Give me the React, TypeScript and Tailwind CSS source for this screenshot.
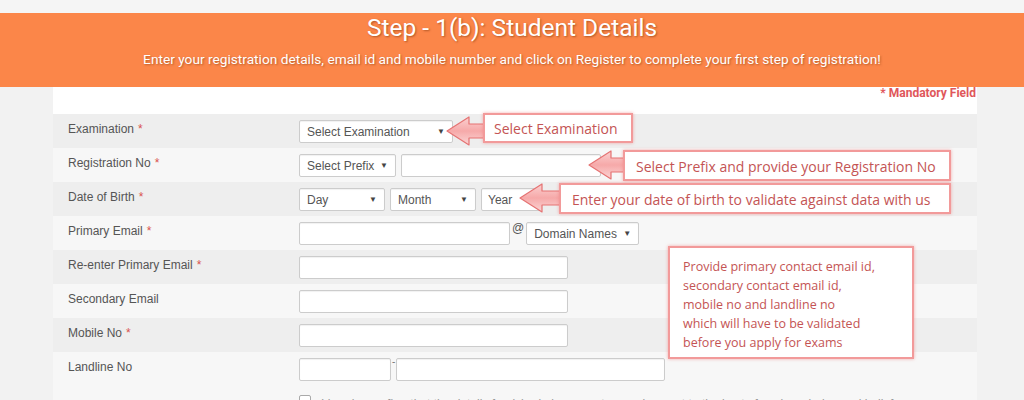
import React from "react"

const label = "text-[12px] text-[#555555]"
const inputCls = "h-[23px] border border-[#cccccc] bg-white rounded-[2px] shadow-[inset_0_1px_1px_rgba(0,0,0,0.06)]"

function Select({ text, w }: { text: string; w: string }) {
  return (
    <div className={`${inputCls} ${w} flex items-center justify-between px-[7px] text-[12px] text-[#555555]`}>
      <span>{text}</span>
      <span className="text-[8px] text-[#444]">▼</span>
    </div>
  )
}

function Row({ title, req, shade, children }: { title: string; req?: boolean; shade: boolean; children?: React.ReactNode }) {
  return (
    <div className={`flex h-[34px] ${shade ? "bg-[#eeeeee]" : "bg-[#f7f7f7]"}`}>
      <div className={`w-[246px] pl-[15px] pt-[6px] ${label}`}>
        {title}
        {req && <span className="text-[#d9534f] ml-[4px]">*</span>}
      </div>
      <div className="flex items-start pt-[6px] gap-[5px]">{children}</div>
    </div>
  )
}

function Arrow({ w = 40 }: { w?: number }) {
  return (
    <svg width={w} height="32" viewBox={`0 0 ${w} 32`}>
      <defs>
        <linearGradient id="ag" x1="0" y1="0" x2="0" y2="1">
          <stop offset="0" stopColor="#fbd0d0" />
          <stop offset="0.5" stopColor="#f6a9a9" />
          <stop offset="1" stopColor="#fbd6d6" />
        </linearGradient>
      </defs>
      <path
        d={`M1 16 L23 2 L23 9 L${w} 9 L${w} 23 L23 23 L23 30 Z`}
        fill="url(#ag)"
        stroke="#e57373"
        strokeWidth="1.2"
        strokeLinejoin="round"
      />
    </svg>
  )
}

function Callout({ children, cls }: { children: React.ReactNode; cls: string }) {
  return (
    <div
      className={`absolute bg-white border-2 border-[#f29a9a] shadow-[0_0_3px_rgba(240,120,120,0.6)] text-[#c45454] ${cls}`}
      style={{ fontFamily: '"Open Sans", "Noto Sans", sans-serif' }}
    >
      {children}
    </div>
  )
}

export default function App() {
  return (
    <div className="relative w-[1024px] h-[400px] overflow-hidden bg-[#f2f2f2]" style={{ fontFamily: '"Liberation Sans", Arial, sans-serif' }}>
      <div className="h-[13px] bg-[#f5f5f5]" />
      <div className="h-[74px] bg-[#fb8649] text-center text-white" style={{ fontFamily: "Roboto, sans-serif" }}>
        <div className="text-[24.5px] leading-[28px] pt-[1px] [text-shadow:1px_1px_2px_rgba(120,50,10,0.55)]">Step - 1(b): Student Details</div>
        <div className="text-[13.7px] leading-[16px] mt-[9px] [text-shadow:1px_1px_2px_rgba(120,50,10,0.5)]">
          Enter your registration details, email id and mobile number and click on Register to complete your first step of registration!
        </div>
      </div>
      <div className="ml-[53px] mr-[47px] bg-white">
        <div className="h-[27px] flex justify-end pr-[1px]">
          <span className="text-[12px] leading-[12px] font-bold text-[#e0575b]" style={{ fontFamily: "Roboto, sans-serif" }}>* Mandatory Field</span>
        </div>
        <Row title="Examination" req shade>
          <Select text="Select Examination" w="w-[154px]" />
        </Row>
        <Row title="Registration No" req shade={false}>
          <Select text="Select Prefix" w="w-[97px]" />
          <div className={`${inputCls} w-[200px]`} />
        </Row>
        <Row title="Date of Birth" req shade>
          <Select text="Day" w="w-[86px]" />
          <Select text="Month" w="w-[86px]" />
          <div className={`${inputCls} w-[60px] px-[6px] text-[12px] text-[#555] flex items-center`}>Year</div>
        </Row>
        <Row title="Primary Email" req shade={false}>
          <div className={`${inputCls} w-[211px]`} />
          <span className="text-[12px] text-[#555] -mt-[3px] -mx-[3px]">@</span>
          <Select text="Domain Names" w="w-[113px]" />
        </Row>
        <Row title="Re-enter Primary Email" req shade>
          <div className={`${inputCls} w-[269px]`} />
        </Row>
        <Row title="Secondary Email" shade={false}>
          <div className={`${inputCls} w-[269px]`} />
        </Row>
        <Row title="Mobile No" req shade>
          <div className={`${inputCls} w-[269px]`} />
        </Row>
        <Row title="Landline No" shade={false}>
          <div className={`${inputCls} w-[92px]`} />
          <span className="text-[10px] text-[#777] -mx-[4px] -mt-[4px]">-</span>
          <div className={`${inputCls} w-[269px]`} />
        </Row>
        <div className="h-[40px] bg-[#f7f7f7] flex items-start pl-[246px] pt-[9px] gap-[10px]">
          <div className="w-[12px] h-[12px] border border-[#aaa] rounded-[2px] bg-white" />
          <span className="text-[12px] leading-[14px] text-[#999] mt-[2px]">I hereby confirm that the details furnished above are true and correct to the best of my knowledge and belief.</span>
        </div>
      </div>

      <div className="absolute left-[446px] top-[115px]"><Arrow w={40} /></div>
      <Callout cls="left-[483px] top-[113px] w-[150px] h-[30px] pl-[9px] pt-[3px] text-[14px]">Select Examination</Callout>

      <div className="absolute left-[588px] top-[149px]"><Arrow w={38} /></div>
      <Callout cls="left-[623px] top-[150px] w-[328px] h-[31px] pl-[11px] pt-[4px] text-[14px]">Select Prefix and provide your Registration No</Callout>

      <div className="absolute left-[519px] top-[182px]"><Arrow w={43} /></div>
      <Callout cls="left-[559px] top-[183px] w-[392px] h-[31px] pl-[11px] pt-[4px] text-[14px]">Enter your date of birth to validate against data with us</Callout>

      <Callout cls="left-[668px] top-[246px] w-[246px] h-[113px] pl-[13px] pt-[9px] leading-[19px] text-[12.5px]">
        Provide primary contact email id,<br />
        secondary contact email id,<br />
        mobile no and landline no<br />
        which will have to be validated<br />
        before you apply for exams
      </Callout>
    </div>
  )
}
